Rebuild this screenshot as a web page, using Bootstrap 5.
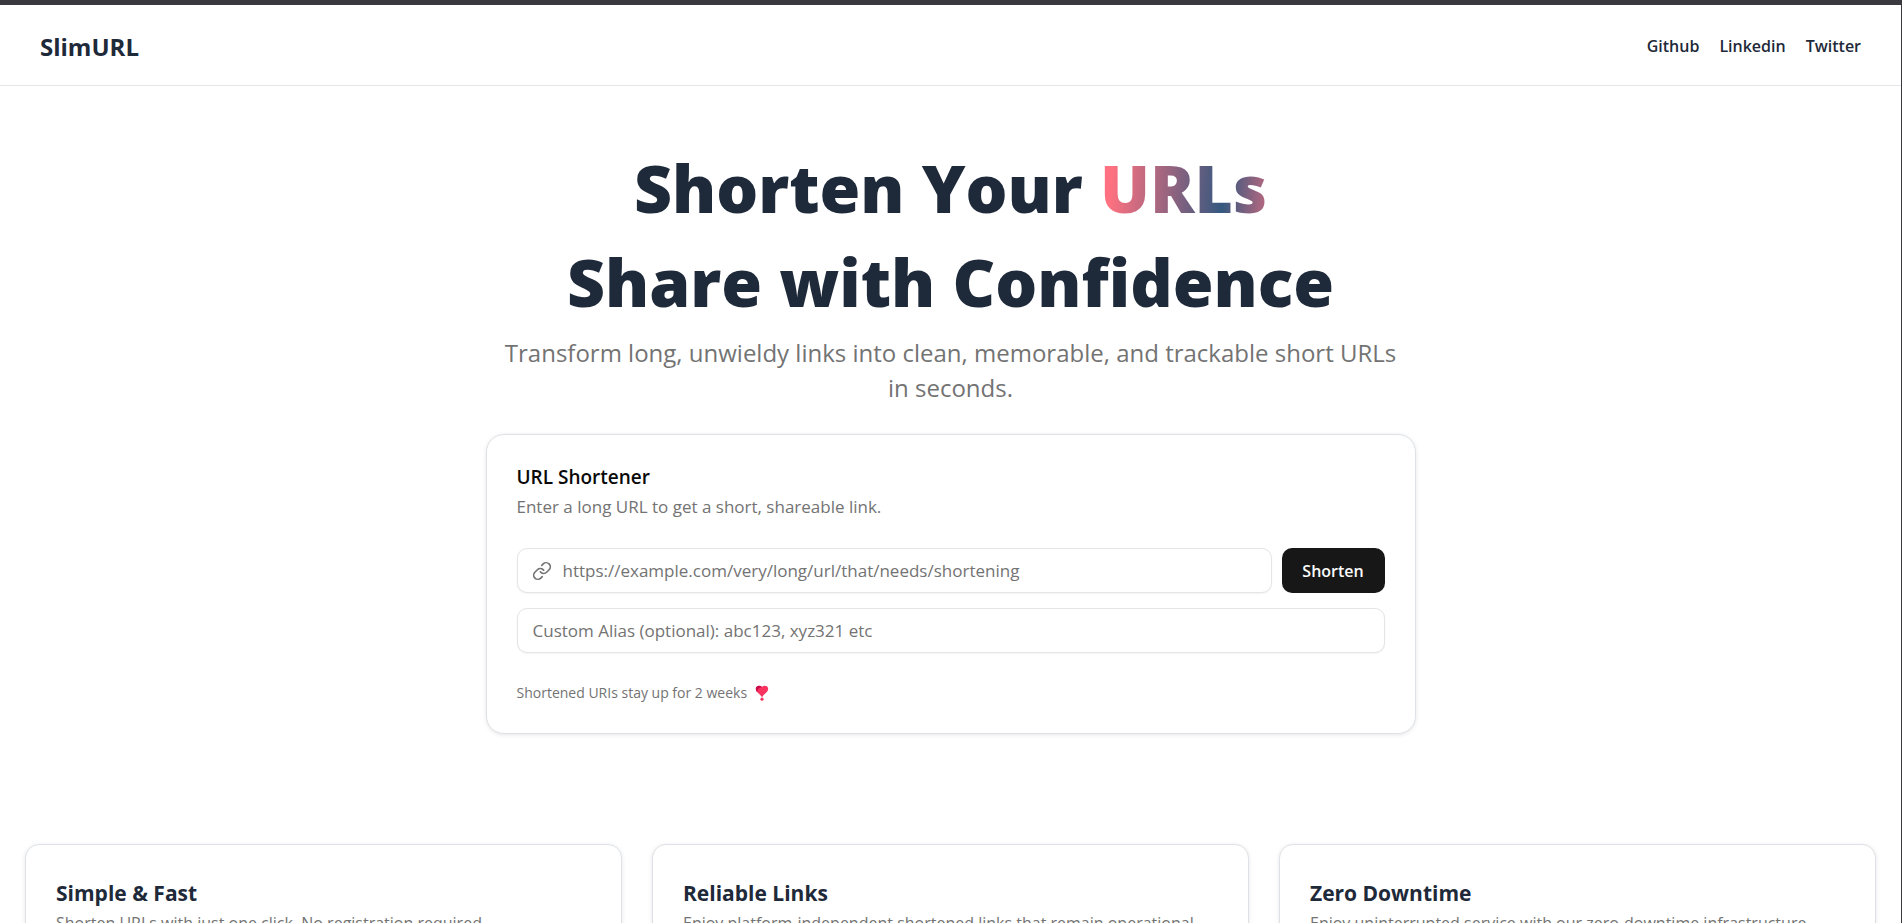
<!DOCTYPE html>
<html lang="en">
<head>
<meta charset="utf-8">
<meta name="viewport" content="width=device-width, initial-scale=1">
<title>SlimURL</title>
<link href="https://cdn.jsdelivr.net/npm/bootstrap@5.3.0/dist/css/bootstrap.min.css" rel="stylesheet">
<style>
  :root { --ink: #1e2939; --muted: #737373; --line: #e5e5e5; }
  body {
    height: 100vh;
    overflow: hidden;
    font-family: "Open Sans", "Noto Sans", sans-serif;
    font-size: 17px;
    line-height: 25px;
    color: #0a0a0a;
    border-top: 5px solid #3a393f;
    border-right: 1px solid #3a393f;
  }
  .site-header { height: 81px; padding: 2px 40px 0; border-bottom: 1px solid var(--line); }
  .brand { font-size: 24px; line-height: 35px; color: var(--ink); }
  .site-links { gap: 20px; }
  .site-links a { font-size: 16px; font-weight: 600; color: var(--ink); }
  .hero { padding-top: 54px; }
  .hero h1 { font-size: 66px; line-height: 94px; font-weight: 800; color: var(--ink); }
  .hero-accent {
    background: linear-gradient(95deg, #ff7180 8%, #35587f 73%, #ff7180 112%);
    -webkit-background-clip: text;
    background-clip: text;
    color: transparent;
  }
  .tagline { max-width: 900px; margin: 7px 0 29px; font-size: 24px; line-height: 35px; color: var(--muted); }
  .panel { border-color: var(--line); box-shadow: 0 1px 4px rgba(0, 0, 0, .1); background: #fff; }
  .panel-main { width: 100%; max-width: 930px; padding: 30px; border-radius: 18px; }
  .panel-main h2 { font-size: 19px; line-height: 25px; font-weight: 600; }
  .panel-main form { display: grid; gap: 15px; margin: 29px 0 30px; }
  .text-soft { color: var(--muted); }
  .url-row { gap: 10px; }
  .field {
    height: 45px;
    padding: 0 15px;
    font-size: 17px;
    border: 1px solid var(--line);
    border-radius: 10px;
    box-shadow: 0 1px 2px rgba(0, 0, 0, .05);
  }
  .field::placeholder { color: var(--muted); }
  .field-linked { padding-left: 45px; }
  .field-icon { left: 15px; top: 13px; color: var(--muted); }
  .btn-shorten {
    height: 45px; width: 103px; padding: 0;
    font-size: 16px; font-weight: 600;
    color: #fafafa; background: #171717; border-radius: 10px;
  }
  .btn-shorten:hover { color: #fff; background: #2b2b2b; }
  .note { font-size: 14px; line-height: 20px; }
  .features { display: grid; grid-template-columns: repeat(3, 1fr); gap: 30px; padding: 110px 25px 0; }
  .panel-feature { padding: 30px; border-radius: 14px; }
  .panel-feature h3 { font-size: 21px; line-height: 36px; font-weight: 700; color: var(--ink); }
  .panel-feature p { font-size: 16px; }
  @media (max-width: 991px) {
    body { height: auto; overflow: auto; }
    .hero { padding-left: 20px; padding-right: 20px; }
    .hero h1 { font-size: 40px; line-height: 56px; }
    .features { grid-template-columns: 1fr; }
  }
</style>
</head>
<body>
<header class="site-header d-flex align-items-center justify-content-between">
  <a class="brand fw-bold text-decoration-none" href="#">SlimURL</a>
  <nav class="site-links d-flex" aria-label="Social">
    <a class="text-decoration-none" href="#">Github</a>
    <a class="text-decoration-none" href="#">Linkedin</a>
    <a class="text-decoration-none" href="#">Twitter</a>
  </nav>
</header>

<main>
  <section class="hero d-flex flex-column align-items-center text-center">
    <h1 class="mb-0">Shorten Your <span class="hero-accent">URLs</span><br>Share with Confidence</h1>
    <p class="tagline">Transform long, unwieldy links into clean, memorable, and trackable short URLs in seconds.</p>

    <div class="panel panel-main border text-start">
      <h2 class="mb-1">URL Shortener</h2>
      <p class="text-soft mb-0">Enter a long URL to get a short, shareable link.</p>
      <form>
        <div class="url-row d-flex">
          <div class="position-relative flex-grow-1">
            <svg class="field-icon position-absolute" width="20" height="20" viewBox="0 0 24 24" fill="none" stroke="currentColor" stroke-width="2" stroke-linecap="round" stroke-linejoin="round" aria-hidden="true">
              <path d="M10 13a5 5 0 0 0 7.54.54l3-3a5 5 0 0 0-7.07-7.07l-1.72 1.71"/>
              <path d="M14 11a5 5 0 0 0-7.54-.54l-3 3a5 5 0 0 0 7.07 7.07l1.71-1.71"/>
            </svg>
            <input class="form-control field field-linked" type="url" aria-label="Long URL" placeholder="https://example.com/very/long/url/that/needs/shortening">
          </div>
          <button class="btn btn-shorten" type="submit">Shorten</button>
        </div>
        <input class="form-control field" type="text" aria-label="Custom alias" placeholder="Custom Alias (optional): abc123, xyz321 etc">
      </form>
      <p class="note text-soft d-flex align-items-center gap-2 mb-0">Shortened URIs stay up for 2 weeks
        <svg width="14" height="16" viewBox="0 0 14 16" aria-hidden="true"><path fill="#f8335f" d="M7 12.500C5.800 9.500.8 7.500.8 3.800.8 1 4.800-.2 7 2 9.200-.2 13.200 1 13.200 3.800 13.200 7.500 8.200 9.500 7 12.500Z"/><path fill="#ca0b4a" d="M.8 3.800C.8 1 4.800-.2 7 2 4 2.500 2.500 4.500 2.300 7.300 1.400 6.300.8 5.200.8 3.800Z"/><circle cx="7" cy="14.200" r="1.600" fill="#f8335f"/></svg>
      </p>
    </div>
  </section>

  <section class="features">
    <article class="panel panel-feature border">
      <h3 class="mb-0">Simple &amp; Fast</h3>
      <p class="text-soft mb-0">Shorten URLs with just one click. No registration required.</p>
    </article>
    <article class="panel panel-feature border">
      <h3 class="mb-0">Reliable Links</h3>
      <p class="text-soft mb-0">Enjoy platform-independent shortened links that remain operational.</p>
    </article>
    <article class="panel panel-feature border">
      <h3 class="mb-0">Zero Downtime</h3>
      <p class="text-soft mb-0">Enjoy uninterrupted service with our zero-downtime infrastructure.</p>
    </article>
  </section>
</main>
<script src="https://cdn.jsdelivr.net/npm/bootstrap@5.3.0/dist/js/bootstrap.bundle.min.js"></script>
</body>
</html>
